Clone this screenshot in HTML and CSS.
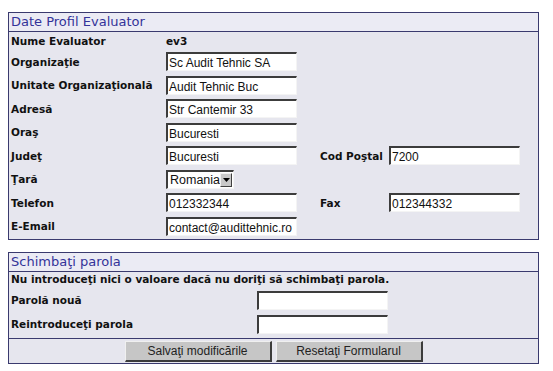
FILE: index.html
```html
<!DOCTYPE html>
<html lang="ro">
<head>
    <meta charset="UTF-8">
    <title>Date Profil Evaluator</title>
    <link rel="stylesheet" href="styles.css">
</head>
<body>
    <div class="panel">
        <div class="panel-title">Date Profil Evaluator</div>
        <div class="profile-grid">
            <div class="label">Nume Evaluator</div>
            <div class="value">ev3</div>
            <div class="blank"></div>

            <div class="label">Organizaţie</div>
            <div class="field"><span class="input">Sc Audit Tehnic SA</span></div>
            <div class="blank"></div>

            <div class="label">Unitate Organizaţională</div>
            <div class="field"><span class="input">Audit Tehnic Buc</span></div>
            <div class="blank"></div>

            <div class="label">Adresă</div>
            <div class="field"><span class="input">Str Cantemir 33</span></div>
            <div class="blank"></div>

            <div class="label">Oraş</div>
            <div class="field"><span class="input">Bucuresti</span></div>
            <div class="blank"></div>

            <div class="label">Judeţ</div>
            <div class="field"><span class="input">Bucuresti</span></div>
            <div class="label">Cod Poştal</div>
            <div class="field"><span class="input">7200</span></div>

            <div class="label">Ţară</div>
            <div class="field">
                <span class="select">Romania<span class="arrow"><svg width="7" height="4" viewBox="0 0 7 4"><path d="M0 0h7L3.5 4z" fill="#000"/></svg></span></span>
            </div>
            <div class="blank"></div>

            <div class="label">Telefon</div>
            <div class="field"><span class="input">012332344</span></div>
            <div class="label">Fax</div>
            <div class="field"><span class="input">012344332</span></div>

            <div class="label">E-Email</div>
            <div class="field"><span class="input">contact@audittehnic.ro</span></div>
            <div class="blank"></div>
        </div>
    </div>

    <div class="panel panel-password">
        <div class="panel-title">Schimbaţi parola</div>
        <div class="note">Nu introduceţi nici o valoare dacă nu doriţi să schimbaţi parola.</div>
        <div class="password-grid">
            <div class="label">Parolă nouă</div>
            <div class="field"><span class="input"></span></div>
            <div class="label">Reintroduceţi parola</div>
            <div class="field"><span class="input"></span></div>
        </div>
        <div class="actions">
            <button class="btn">Salvaţi modificările</button>
            <button class="btn">Resetaţi Formularul</button>
        </div>
    </div>
</body>
</html>
```

FILE: styles.css
```css
body {
    margin: 0;
    padding: 12px 14px 0 8px;
    background-color: white;
    font-family: "DejaVu Sans", Verdana, sans-serif;
}
.panel {
    border: 1px solid #3a3a6e;
    background-color: #e6e6ee;
}
.panel-password {
    margin-top: 12px;
}
.panel-title {
    height: 18px;
    line-height: 18px;
    padding-left: 2px;
    font-size: 13px;
    color: #333399;
    background-color: #ebebf4;
    border-bottom: 1px solid #3a3a6e;
}
.label {
    font-size: 10.5px;
    font-weight: bold;
    color: #111;
    padding-left: 2px;
    display: flex;
    align-items: center;
}
.profile-grid {
    display: grid;
    grid-template-columns: 157px 152px 71px 1fr;
    grid-template-rows: 18px;
    grid-auto-rows: 23.5px;
    padding-bottom: 1px;
}
.profile-grid .blank {
    grid-column: span 2;
}
.value {
    font-size: 10.5px;
    font-weight: bold;
    color: #111;
    display: flex;
    align-items: center;
}
.field {
    display: flex;
    align-items: center;
}
.input {
    box-sizing: border-box;
    display: block;
    width: 131px;
    height: 19px;
    padding: 2px 0 0 1px;
    background-color: white;
    border-top: 2px solid #3c3c3c;
    border-left: 2px solid #3c3c3c;
    border-right: 1px solid #f4f4f4;
    border-bottom: 1px solid #f4f4f4;
    font-family: "Liberation Sans", Arial, sans-serif;
    font-size: 12px;
    color: #111;
    white-space: nowrap;
    overflow: hidden;
}
.select {
    box-sizing: border-box;
    display: flex;
    align-items: center;
    justify-content: space-between;
    width: 68px;
    height: 19px;
    padding: 0 1px 0 2px;
    background-color: white;
    border-top: 2px solid #3c3c3c;
    border-left: 2px solid #3c3c3c;
    border-right: 1px solid #f4f4f4;
    border-bottom: 1px solid #f4f4f4;
    font-family: "Liberation Sans", Arial, sans-serif;
    font-size: 12.5px;
    color: #111;
}
.arrow {
    box-sizing: border-box;
    width: 14px;
    height: 14px;
    display: flex;
    align-items: center;
    justify-content: center;
    background-color: #c8c8c8;
    border-right: 1px solid #404040;
    border-bottom: 1px solid #404040;
    border-top: 1px solid #f0f0f0;
    border-left: 1px solid #f0f0f0;
}
.note {
    font-size: 10.5px;
    font-weight: bold;
    color: #111;
    padding: 1px 0 0 2px;
    height: 15px;
}
.password-grid {
    display: grid;
    grid-template-columns: 248px 1fr;
    grid-auto-rows: 24px;
}
.actions {
    display: flex;
    justify-content: center;
    gap: 4px;
    margin-top: 2px;
    padding-top: 2px;
    border-top: 1px solid #3a3a6e;
    height: 22px;
}
.btn {
    box-sizing: border-box;
    width: 147px;
    height: 21px;
    padding: 0;
    font-family: "Liberation Sans", Arial, sans-serif;
    font-size: 12px;
    color: #222;
    background-color: #c6c6c6;
    border-top: 1px solid #f0f0f0;
    border-left: 1px solid #f0f0f0;
    border-right: 2px solid #3c3c3c;
    border-bottom: 2px solid #3c3c3c;
}
```
